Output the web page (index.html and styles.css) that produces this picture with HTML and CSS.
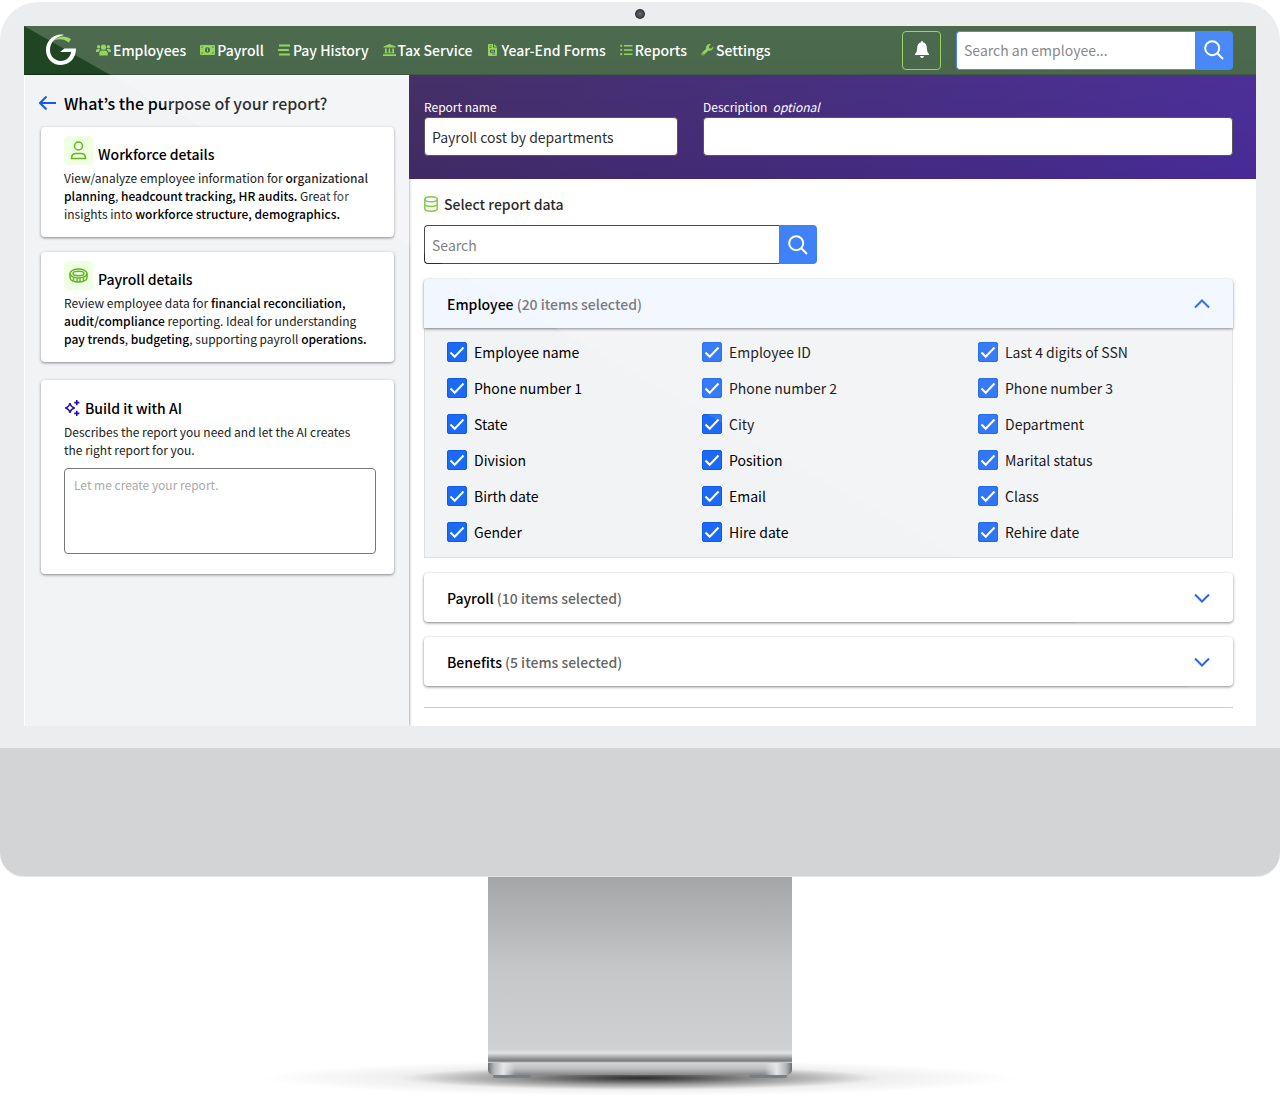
FILE: index.html
```html
<!DOCTYPE html>
<html lang="en">
<head>
  <meta charset="UTF-8" />
  <meta name="viewport" content="width=device-width, initial-scale=1" />
  <title>Report Builder</title>
  <link rel="stylesheet" href="styles.css">
</head>
<body>

<div class="monitor">
  <div class="bezel">
    <span class="camera"></span>

    <div class="screen">
      <header class="topbar">
        <a class="logo" href="#" aria-label="Home">
          <svg width="32" height="32" viewBox="0 0 32 32">
            <path d="M19 .9C16 .2 13.500.4 11 1.600 4.600 4 1 9.500 1 16.200 1 24.500 7.500 31 15.800 31 24.500 31 31 24.600 31 14.600H19.500L15 18H26.200C25 23.500 21.300 27 15.900 27 9.700 27 5 22.300 5 16.100 5 8.500 10 3 19 .9Z" fill="#fff"/>
            <path d="M9 6.500C13.500 1.500 21 1.500 26 5.300L23.800 8.600C19.500 5 14.500 4.300 9 6.500Z" fill="#86cf45"/>
          </svg>
        </a>
        <nav class="menu">
          <a href="#">
            <svg width="15" height="12" viewBox="0 0 15 12"><circle cx="7.500" cy="3.200" r="2.600"/><circle cx="2.600" cy="2.800" r="1.700"/><circle cx="12.400" cy="2.800" r="1.700"/><path d="M3.300 11.500V9.500q0-3 3-3h2.400q3 0 3 3v2zM0 8V6.800q0-1.800 1.800-1.800h1.800l.8.700Q2.700 6.500 2.600 8zM15 8V6.800q0-1.800-1.800-1.800h-1.800l-.8.700q1.700.8 1.800 2.300z"/></svg>
            Employees
          </a>
          <a href="#">
            <svg width="15" height="12" viewBox="0 0 15 12"><path fill-rule="evenodd" d="M1 1h13q1 0 1 1v8q0 1-1 1H1q-1 0-1-1V2q0-1 1-1zm.6 1.500v1.800l1.800-1.800zm0 7h1.800L1.600 7.700zm11.800-7h-1.800l1.800 1.800zm0 7V7.700l-1.800 1.800zM7.500 3.200a2.500 2.800 0 1 0 0 5.600 2.500 2.800 0 1 0 0-5.600zM7 4.500h1v3H7z"/></svg>
            Payroll
          </a>
          <a href="#">
            <svg width="13" height="12" viewBox="0 0 13 12"><rect x="1" y="0.500" width="11" height="2" rx=".5"/><rect x="0" y="5" width="11" height="2" rx=".5"/><rect x="1" y="9.500" width="11" height="2" rx=".5"/></svg>
            Pay History
          </a>
          <a href="#">
            <svg width="13" height="12" viewBox="0 0 13 12"><path d="M6.500 0 12.500 2.500v1H.5v-1zM2 4.500h1.700v4H5.700v-4h1.600v4h2v-4H11v4l1 .8H1l1-.8zM0 10.300h13V12H0z"/></svg>
            Tax Service
          </a>
          <a href="#">
            <svg width="13" height="12" viewBox="0 0 13 12"><path fill-rule="evenodd" d="M3 0h4v3.500h4V11q0 1-1 1H3q-1 0-1-1V1q0-1 1-1zm.5 1.500v.8h2v-.8zm0 1.800v.8h2v-.8zM4 5.700v3h5v-3zm1 1h3v1H5zm1 3v.8h3v-.8zM8 0l3 2.700H8z"/></svg>
            Year-End Forms
          </a>
          <a href="#">
            <svg width="13" height="12" viewBox="0 0 13 12"><circle cx="1.200" cy="1.800" r="1.100"/><circle cx="1.200" cy="6" r="1.100"/><circle cx="1.200" cy="10.200" r="1.100"/><path d="M4 1h8.500v1.500H4zM4 5.300h8.500v1.500H4zM4 9.500h8.500V11H4z"/></svg>
            Reports
          </a>
          <a href="#">
            <svg width="13" height="12" viewBox="0 0 13 12"><path fill-rule="evenodd" d="M12.300 2.500 10 4.800 8.300 4.300 7.800 2.600 10 .3Q7.700-.4 6 1.300 4.800 2.700 5.300 4.600L.8 9.100q-.9 1 0 2 1 .9 2 0l4.600-4.600q2 .6 3.600-.7 1.800-1.500 1.300-3.300zM1.800 9.700a.5.5 0 1 1 0 .9.500.5 0 1 1 0-.9z"/></svg>
            Settings
          </a>
        </nav>
        <button class="bell" type="button" aria-label="Notifications">
          <svg width="16" height="18" viewBox="0 0 16 18"><path d="M8 0q1 0 1 1.200Q12.800 2.200 12.800 7q0 4 2.200 6v1H1v-1q2.200-2 2.200-6 0-4.800 3.800-5.800Q7 0 8 0zM6 15h4q-.3 2-2 2t-2-2z" fill="#fff"/></svg>
        </button>
        <form class="search search-top">
          <input type="text" placeholder="Search an employee..." aria-label="Search an employee">
          <button type="button" aria-label="Search">
            <svg width="20" height="20" viewBox="0 0 20 20"><circle cx="8.200" cy="8.200" r="7"/><path d="m13.300 13.300 5.700 5.700"/></svg>
          </button>
        </form>
      </header>

      <div class="content">
        <aside class="sidebar">
          <h1 class="title">
            <a href="#" aria-label="Back"><svg width="17" height="14" viewBox="0 0 17 14"><path d="M17 7H1M7.500.5 1 7l6.500 6.500"/></svg></a>
            What’s the purpose of your report?
          </h1>

          <section class="card">
            <h2>
              <span class="tile">
                <svg width="17" height="19" viewBox="0 0 17 19"><circle cx="8.500" cy="5" r="4"/><path d="M1.500 17.500q0-5 4.500-5h5q4.500 0 4.500 5z"/></svg>
              </span>
              Workforce details
            </h2>
            <p>View/analyze employee information for <b>organizational planning</b>, <b>headcount tracking, HR audits.</b> Great for insights into <b>workforce structure, demographics.</b></p>
          </section>

          <section class="card">
            <h2>
              <span class="tile">
                <svg width="19" height="15" viewBox="0 0 19 15"><ellipse cx="9.500" cy="5.500" rx="8.500" ry="4.500"/><ellipse cx="9.500" cy="5.500" rx="5.500" ry="2.200"/><path d="M1 5.500v4c0 6 17 6 17 0v-4M4.500 9.500v3M8 10.500V14M11 10.500V14M14.500 9.500v3"/></svg>
              </span>
              Payroll details
            </h2>
            <p>Review employee data for <b>financial reconciliation, audit/compliance</b> reporting. Ideal for understanding <b>pay trends</b>, <b>budgeting</b>, supporting payroll <b>operations.</b></p>
          </section>

          <section class="card card-ai">
            <h2>
              <svg width="16" height="16" viewBox="0 0 16 16"><path d="M6 3.200Q6.800 7.200 10.800 8.000 6.800 8.800 6 12.800 5.200 8.800 1.200 8 5.200 7.200 6 3.200z" fill="none" stroke="#2a0fa5" stroke-width="1.500"/><path d="M12.800 0v5.200M10.200 2.600h5.200M12.800 10.800V16M10.200 13.400h5.200" stroke="#2a0fa5" stroke-width="1.600"/></svg>
              Build it with AI
            </h2>
            <p><label for="prompt">Describes the report you need and let the AI creates the right report for you.</label></p>
            <textarea id="prompt" placeholder="Let me create your report."></textarea>
          </section>
        </aside>

        <main class="main">
          <div class="banner">
            <div class="field field-name">
              <label for="reportName">Report name</label>
              <input type="text" id="reportName" value="Payroll cost by departments">
            </div>
            <div class="field field-desc">
              <label for="reportDesc">Description &nbsp;<i>optional</i></label>
              <input type="text" id="reportDesc">
            </div>
          </div>

          <div class="data">
            <h2 class="heading">
              <svg width="14" height="16" viewBox="0 0 14 16"><ellipse cx="7" cy="3.300" rx="6.200" ry="2.500"/><path d="M.8 3.300v9.400c0 3.300 12.400 3.300 12.400 0V3.300M.8 8c0 3.200 12.400 3.200 12.400 0"/></svg>
              Select report data
            </h2>

            <form class="search search-data">
              <input type="text" placeholder="Search" aria-label="Search report data">
              <button type="button" aria-label="Search">
                <svg width="20" height="20" viewBox="0 0 20 20"><circle cx="8.200" cy="8.200" r="7"/><path d="m13.300 13.300 5.700 5.700"/></svg>
              </button>
            </form>

            <div class="group">
              <button class="bar open" type="button" aria-expanded="true">
                <span><b>Employee</b> (20 items selected)</span>
                <svg width="16" height="10" viewBox="0 0 16 10"><path d="m1 8.500 7-7 7 7"/></svg>
              </button>
              <div class="options">
                <label><input type="checkbox" checked>Employee name</label>
                <label><input type="checkbox" checked>Employee ID</label>
                <label><input type="checkbox" checked>Last 4 digits of SSN</label>
                <label><input type="checkbox" checked>Phone number 1</label>
                <label><input type="checkbox" checked>Phone number 2</label>
                <label><input type="checkbox" checked>Phone number 3</label>
                <label><input type="checkbox" checked>State</label>
                <label><input type="checkbox" checked>City</label>
                <label><input type="checkbox" checked>Department</label>
                <label><input type="checkbox" checked>Division</label>
                <label><input type="checkbox" checked>Position</label>
                <label><input type="checkbox" checked>Marital status</label>
                <label><input type="checkbox" checked>Birth date</label>
                <label><input type="checkbox" checked>Email</label>
                <label><input type="checkbox" checked>Class</label>
                <label><input type="checkbox" checked>Gender</label>
                <label><input type="checkbox" checked>Hire date</label>
                <label><input type="checkbox" checked>Rehire date</label>
              </div>
            </div>

            <button class="bar" type="button" aria-expanded="false">
              <span><b>Payroll</b> (10 items selected)</span>
              <svg width="16" height="10" viewBox="0 0 16 10"><path d="m1 1.500 7 7 7-7"/></svg>
            </button>
            <button class="bar" type="button" aria-expanded="false">
              <span><b>Benefits</b> (5 items selected)</span>
              <svg width="16" height="10" viewBox="0 0 16 10"><path d="m1 1.500 7 7 7-7"/></svg>
            </button>
            <hr>
          </div>
        </main>
      </div>

      <div class="glare"></div>
    </div>
  </div>

  <div class="chin"></div>
  <div class="stand">
    <div class="neck"></div>
    <div class="foot"></div>
  </div>
</div>

</body>
</html>
```
FILE: styles.css
```css
* {
  box-sizing: border-box;
}
body {
  margin: 0;
  background: #fff;
  color: #000;
  font-family: "Noto Sans CJK KR", "Open Sans", sans-serif;
  font-size: 14px;
  line-height: 20px;
}
h1, h2, p {
  margin: 0;
}
a {
  color: inherit;
  text-decoration: none;
}
input, button, textarea {
  font: inherit;
  color: inherit;
}
button {
  padding: 0;
  cursor: pointer;
}
svg {
  display: block;
  flex: none;
}

/* monitor */
.monitor {
  padding-top: 2px;
}
.bezel {
  position: relative;
  padding: 24px 24px 22px;
  background: #ecedef;
  border-radius: 38px 38px 0 0;
}
.camera {
  position: absolute;
  top: 7px;
  left: 50%;
  width: 10px;
  height: 10px;
  margin-left: -5px;
  border-radius: 50%;
  background: radial-gradient(#6c6c78, #35363a 65%);
}
.screen {
  position: relative;
  overflow: hidden;
  background: #fff;
}
.glare {
  position: absolute;
  inset: 0;
  background: linear-gradient(rgba(255, 255, 255, .2), rgba(255, 255, 255, .08) 75%);
  clip-path: polygon(0 0, 100% 0, 100% 100%);
  pointer-events: none;
}
.chin {
  height: 129px;
  background: #d3d4d6;
  border-bottom: 1px solid #e3e4e6;
  border-radius: 0 0 24px 24px;
}
.stand {
  position: relative;
  height: 219px;
  background:
    radial-gradient(closest-side, rgba(0, 0, 0, .75), rgba(0, 0, 0, .3) 50%, transparent) 50% 189px / 480px 24px no-repeat,
    radial-gradient(closest-side, rgba(0, 0, 0, .3), rgba(0, 0, 0, .07) 60%, transparent) 50% 183px / 760px 36px no-repeat;
}
.neck {
  width: 304px;
  height: 186px;
  margin: 0 auto;
  background: linear-gradient(#a3a5a7, #c6c7c9 50%, #cfd0d2 172px, #e2e3e5 176px, #9a9c9e 181px, #77797b 184px, #dcdddf 186px);
}
.foot {
  width: 304px;
  height: 12px;
  margin: 0 auto;
  border-radius: 0 0 5px 5px;
  background:
    linear-gradient(90deg, #6d6f71, #b4b6b8 2%, #e6e7e9 5%, transparent 9%, transparent 91%, #e6e7e9 95%, #b4b6b8 98%, #6d6f71),
    linear-gradient(#d4d5d7, #bcbdbf 50%, #858688);
}
.foot::before,
.foot::after {
  content: "";
  position: absolute;
  top: 198px;
  left: calc(50% - 147px);
  width: 38px;
  height: 3px;
  background: #7b7d80;
  border-radius: 0 0 2px 2px;
}
.foot::after {
  left: calc(50% + 109px);
}

/* top bar */
.topbar {
  display: flex;
  align-items: center;
  height: 49px;
  padding: 0 23px 0 21px;
  background: #1f4522;
  border-bottom: 1px solid #173319;
  color: #fff;
}
.logo {
  margin-right: 19px;
}
.menu {
  display: flex;
  gap: 14px;
  margin-right: auto;
  font-weight: 500;
}
.menu a {
  display: flex;
  align-items: center;
  gap: 2px;
  white-space: nowrap;
}
.menu svg {
  fill: #7ccb38;
}
.bell {
  display: flex;
  align-items: center;
  justify-content: center;
  width: 39px;
  height: 39px;
  margin-right: 15px;
  background: none;
  border: 1px solid #7ccb38;
  border-radius: 4px;
}
.search {
  display: flex;
  height: 39px;
}
.search input {
  flex: 1;
  min-width: 0;
  padding: 0 7px;
  background: #fff;
  border: 1px solid #2b2b2b;
  border-right: 0;
  border-radius: 4px 0 0 4px;
  color: #333;
}
.search ::placeholder {
  color: #6c6c6c;
}
.search button {
  display: flex;
  align-items: center;
  justify-content: center;
  width: 38px;
  background: #1e6cf5;
  border: 0;
  border-radius: 0 4px 4px 0;
}
.search svg {
  fill: none;
  stroke: #fff;
  stroke-width: 2;
}
.search-top {
  width: 277px;
}
.search-top input {
  border-color: #1e6cf5;
}
.search-data {
  max-width: 393px;
  margin-bottom: 15px;
}

/* sidebar */
.content {
  display: flex;
}
.sidebar {
  flex: 0 0 385px;
  padding: 16px 15px 0 16px;
  background: #f2f3f5;
  border-left: 1px solid #fff;
  box-shadow: 1px 0 2px rgba(0, 0, 0, .3);
}
.title {
  display: flex;
  align-items: center;
  gap: 8px;
  height: 24px;
  margin: 0 0 12px -2px;
  font-size: 16px;
  font-weight: 500;
}
.title svg {
  fill: none;
  stroke: #1558f0;
  stroke-width: 2;
}
.card {
  margin-bottom: 15px;
  padding: 9px 18px 14px 23px;
  background: #fff;
  border-radius: 4px;
  box-shadow: 0 1px 3px rgba(0, 0, 0, .45);
}
.card h2 {
  display: flex;
  align-items: flex-end;
  gap: 5px;
  margin-bottom: 4px;
  font-size: 14px;
  font-weight: 500;
  line-height: 22px;
}
.card p {
  padding-right: 8px;
  color: #222;
  font-size: 12px;
  line-height: 18px;
}
.card b {
  color: #000;
  font-weight: 500;
}
.tile {
  display: flex;
  align-items: center;
  justify-content: center;
  width: 29px;
  height: 29px;
  background: #efffe2;
  border-radius: 4px;
}
.tile svg {
  fill: none;
  stroke: #62b422;
  stroke-width: 1.5;
}
.card-ai {
  margin: 18px 0 0;
  padding-top: 17px;
  padding-bottom: 20px;
}
.card-ai h2 {
  align-items: center;
}
.card-ai textarea {
  display: block;
  width: 100%;
  height: 86px;
  margin-top: 9px;
  padding: 7px 9px;
  border: 1px solid #777;
  border-radius: 4px;
  font-size: 12px;
  line-height: 18px;
  resize: none;
}
.card-ai ::placeholder {
  color: #aaa;
}

/* report form */
.main {
  flex: 1;
  min-width: 0;
}
.banner {
  display: flex;
  gap: 25px;
  padding: 22px 23px 23px 15px;
  background: linear-gradient(100deg, #1a0045, #230082);
}
.field {
  flex: 1;
}
.field-name {
  flex: 0 1 254px;
}
.field label {
  display: block;
  color: #fff;
  font-size: 12px;
}
.field input {
  display: block;
  width: 100%;
  height: 39px;
  padding: 0 7px;
  background: #fff;
  border: 1px solid #333;
  border-radius: 4px;
}
.data {
  padding: 15px 23px 18px 15px;
}
.heading {
  display: flex;
  align-items: center;
  gap: 6px;
  margin-bottom: 11px;
  font-size: 14px;
  font-weight: 500;
}
.heading svg {
  fill: none;
  stroke: #6cc02b;
  stroke-width: 1.5;
}
.group {
  margin-bottom: 15px;
}
.bar {
  display: flex;
  align-items: center;
  justify-content: space-between;
  width: 100%;
  height: 49px;
  margin-bottom: 15px;
  padding: 0 23px;
  background: #fff;
  border: 0;
  border-radius: 4px;
  box-shadow: 0 1px 3px rgba(0, 0, 0, .5);
  color: #666;
  font-weight: 500;
}
.bar b {
  color: #000;
  font-weight: 500;
}
.bar svg {
  fill: none;
  stroke: #1558f0;
  stroke-width: 2;
}
.bar.open {
  position: relative;
  margin-bottom: 0;
  background: #f1f6ff;
  border-radius: 4px 4px 0 0;
}
.options {
  display: grid;
  grid-template-columns: 255fr 276fr 254fr;
  row-gap: 16px;
  padding: 14px 0 15px 22px;
  background: #f2f3f5;
  border: 1px solid #dcdee0;
  border-top: 0;
}
.options label {
  display: flex;
  align-items: center;
  gap: 7px;
}
.options input {
  appearance: none;
  width: 20px;
  height: 20px;
  margin: 0;
  border: 1px solid #0f5ae8;
  border-radius: 2px;
}
.options input:checked {
  background: #1b69f5 url("data:image/svg+xml,%3Csvg xmlns='http://www.w3.org/2000/svg' viewBox='0 0 18 18'%3E%3Cpath d='M2.500 9.500l4.200 4.200L15.500 4.500' fill='none' stroke='white' stroke-width='2'/%3E%3C/svg%3E");
}
hr {
  height: 1px;
  margin: 21px 0 0;
  border: 0;
  background: #ccc;
}
```
